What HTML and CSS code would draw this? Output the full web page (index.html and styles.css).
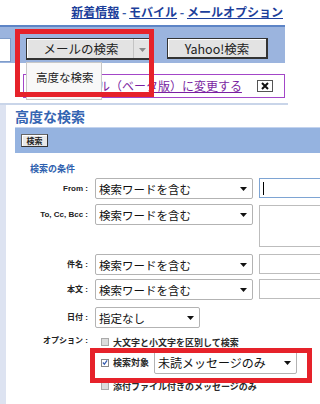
FILE: index.html
```html
<!DOCTYPE html>
<html lang="ja">
<head>
<meta charset="utf-8">
<title>高度な検索</title>
<link rel="stylesheet" href="styles.css">
</head>
<body>
<div class="page">
  <div class="toplinks">
    <a href="#">新着情報</a><span class="sep"> - </span><a href="#">モバイル</a><span class="sep"> - </span><a href="#">メールオプション</a>
  </div>

  <div class="searchbar">
    <div class="q"></div>
    <div class="btn split">
      <span class="btn-label">メールの検索</span>
      <span class="btn-drop"><svg width="7" height="4" viewBox="0 0 7 4"><path d="M0 0h7L3.5 4z" fill="#8a8a8a"/></svg></span>
    </div>
    <div class="btn yahoo">Yahoo!検索</div>
  </div>

  <div class="notice">
    <a href="#" class="notice-link">Yahoo!メール（ベータ版）に変更する</a>
    <span class="close"><svg width="8" height="8" viewBox="0 0 8 8"><path d="M1 1l6 6M7 1L1 7" stroke="#111" stroke-width="2"/></svg></span>
  </div>

  <div class="rule"></div>

  <div class="main">
    <div class="strip"></div>
    <div class="content">
      <h1 class="title">高度な検索</h1>
      <div class="toolbar"><span class="mini-btn">検索</span></div>
      <div class="section-title">検索の条件</div>

      <div class="row row-from">
        <div class="label">From :</div>
        <div class="select"><span>検索ワードを含む</span><svg width="7" height="4" viewBox="0 0 7 4"><path d="M0 0h7L3.5 4z" fill="#111"/></svg></div>
        <div class="field focus"><span class="caret"></span></div>
      </div>

      <div class="row row-to">
        <div class="label">To, Cc, Bcc :</div>
        <div class="select"><span>検索ワードを含む</span><svg width="7" height="4" viewBox="0 0 7 4"><path d="M0 0h7L3.5 4z" fill="#111"/></svg></div>
        <div class="field area"></div>
      </div>

      <div class="row row-subject">
        <div class="label">件名 :</div>
        <div class="select"><span>検索ワードを含む</span><svg width="7" height="4" viewBox="0 0 7 4"><path d="M0 0h7L3.5 4z" fill="#111"/></svg></div>
        <div class="field"></div>
      </div>

      <div class="row row-body">
        <div class="label">本文 :</div>
        <div class="select"><span>検索ワードを含む</span><svg width="7" height="4" viewBox="0 0 7 4"><path d="M0 0h7L3.5 4z" fill="#111"/></svg></div>
        <div class="field"></div>
      </div>

      <div class="row row-date">
        <div class="label">日付 :</div>
        <div class="select date"><span>指定なし</span><svg width="7" height="4" viewBox="0 0 7 4"><path d="M0 0h7L3.5 4z" fill="#111"/></svg></div>
      </div>

      <div class="row row-options">
        <div class="label opt-label">オプション :</div>
        <div class="options">
          <div class="opt opt1"><span class="cb"></span><span class="opt-text">大文字と小文字を区別して検索</span></div>
          <div class="opt opt2"><span class="cb checked"><svg width="7" height="7" viewBox="0 0 7 7"><path d="M1 3.5l1.8 2L6 1" stroke="#3a5fb0" stroke-width="1.4" fill="none"/></svg></span><span class="opt-text">検索対象</span>
            <div class="select unread"><span>未読メッセージのみ</span><svg width="7" height="4" viewBox="0 0 7 4"><path d="M0 0h7L3.5 4z" fill="#111"/></svg></div>
          </div>
          <div class="opt opt3"><span class="cb"></span><span class="opt-text">添付ファイル付きのメッセージのみ</span></div>
        </div>
      </div>
    </div>
  </div>

  <div class="menu">高度な検索</div>
  <div class="highlight hl-top"></div>
  <div class="highlight hl-bottom"></div>
</div>
</body>
</html>
```

FILE: styles.css
```css
* { box-sizing: border-box; margin: 0; padding: 0; }
html, body { width: 320px; height: 404px; overflow: hidden; background: #fff; }
body { font-family: "Noto Sans CJK JP", "Liberation Sans", sans-serif; color: #222; }
.page { position: relative; width: 320px; height: 404px; overflow: hidden; }

/* top links */
.toplinks {
  height: 25px;
  display: flex;
  justify-content: flex-end;
  padding: 4px 37px 0 0;
  font-size: 12px;
  font-weight: bold;
  line-height: 15px;
  color: #1d3f9b;
}
.toplinks a { color: #1d3f9b; text-decoration: underline; }
.sep { white-space: pre; color: #3a5aa8; }

/* search bar */
.searchbar {
  width: 285px;
  height: 38px;
  background: #9bb4de;
  border-top: 2px solid #5d84c6;
  display: flex;
  align-items: flex-start;
  gap: 15px;
  padding-top: 11px;
}
.q { width: 11px; height: 24px; background: #fff; border: 1px solid #7f9cc9; border-left: none; flex: none; }
.btn {
  height: 22px;
  flex: none;
  background: #e3e3e3;
  border: 1px solid #333;
  border-right-width: 2px;
  border-bottom-width: 2px;
  box-shadow: inset 1px 1px 0 #fff;
  font-size: 12.5px;
  line-height: 19px;
  color: #222;
  display: flex;
}
.split { width: 126px; }
.btn-label { flex: 1; text-align: center; padding-left: 2px; }
.btn-drop {
  width: 17px;
  border-left: 1px solid #c4c4c4;
  display: flex;
  align-items: center;
  justify-content: center;
  padding-top: 2px;
}
.yahoo { width: 101px; height: 21px; justify-content: center; }

/* notice */
.notice {
  margin: 11px 0 0 23px;
  width: 262px;
  height: 24px;
  border: 1px solid #a346c8;
  display: flex;
  align-items: center;
  justify-content: space-between;
  padding: 0 11px 0 12px;
}
.notice-link { font-size: 12px; line-height: 16px; color: #7b1fa2; text-decoration: underline; }
.close {
  width: 16px;
  height: 12px;
  border: 1px solid #555;
  background: #fff;
  display: flex;
  align-items: center;
  justify-content: center;
}

.rule { width: 288px; height: 2px; background: #c9d5e9; margin-top: 5px; }

/* main */
.main { display: flex; height: 299px; }
.strip { width: 6px; flex: none; background: #dde3f1; }
.content { flex: 1; min-width: 0; padding-left: 9px; }
.title {
  height: 22px;
  font-size: 14px;
  line-height: 22px;
  font-weight: bold;
  color: #3565b2;
}
.toolbar {
  height: 26px;
  background: #95b3e0;
  border-top: 1px solid #c3d3ee;
  display: flex;
  align-items: center;
  padding-left: 6px;
}
.mini-btn {
  width: 27px;
  height: 13px;
  background: #e8e8e8;
  border: 1px solid #666;
  border-right-color: #333;
  border-bottom-color: #333;
  box-shadow: inset 1px 1px 0 #fff;
  font-size: 8px;
  font-weight: bold;
  line-height: 11px;
  text-align: center;
  color: #222;
}
.section-title {
  margin-top: 10px;
  height: 12px;
  padding-left: 15px;
  font-size: 9px;
  font-weight: bold;
  line-height: 12px;
  color: #2e5fae;
}

/* form rows */
.row { display: flex; align-items: flex-start; }
.row-from { margin-top: 3px; }
.row-to { margin-top: 5px; }
.row-subject { margin-top: 7px; }
.row-body { margin-top: 4px; }
.row-date { margin-top: 7px; }
.row-options { margin-top: 7px; }

.label {
  width: 73px;
  flex: none;
  text-align: right;
  font-family: "Liberation Sans", "Noto Sans CJK JP", sans-serif;
  font-size: 8px;
  font-weight: bold;
  line-height: 21px;
  color: #222;
}
.opt-label { line-height: 10px; padding-top: 1px; }

.select {
  width: 158px;
  height: 21px;
  flex: none;
  margin-left: 7px;
  border: 1px solid #b3b3b3;
  border-radius: 2px;
  background: #fff;
  display: flex;
  align-items: center;
  justify-content: space-between;
  padding: 0 5px 0 3px;
  font-size: 11.5px;
  font-weight: normal;
  color: #111;
}
.select.date { width: 105px; }

.field {
  width: 80px;
  height: 20px;
  flex: none;
  margin-left: 6px;
  border: 1px solid #bdbdbd;
  background: #fff;
  position: relative;
}
.field.focus { border-color: #7ea4d3; }
.caret { position: absolute; left: 3px; top: 3px; width: 1px; height: 13px; background: #000; }
.field.area { height: 42px; margin-top: 1px; }

/* options */
.options { margin-left: 13px; }
.opt {
  display: flex;
  align-items: center;
  font-size: 9px;
  font-weight: bold;
  color: #2a2a2a;
}
.opt1 { height: 14px; }
.opt2 { height: 23px; margin-top: 2px; }
.opt3 { height: 14px; margin-top: 5px; }
.cb {
  width: 8px;
  height: 8px;
  border: 1px solid #aaa;
  background: #dcdcdc;
  margin-right: 4px;
  display: flex;
  align-items: center;
  justify-content: center;
  flex: none;
}
.cb.checked { background: #fff; border-color: #888; }
.select.unread { width: 143px; height: 23px; margin-left: 5px; font-size: 12px; }

/* overlays */
.menu {
  position: absolute;
  left: 26px;
  top: 62px;
  width: 76px;
  height: 38px;
  background: #f8f8f8;
  border: 1px solid #c8c8c8;
  font-size: 11.5px;
  line-height: 14px;
  padding: 7px 0 0 9px;
  color: #222;
}
.highlight { position: absolute; border: 5px solid #e6222a; }
.hl-top { left: 15px; top: 29px; width: 139px; height: 68px; }
.hl-bottom { left: 90px; top: 348px; width: 222px; height: 35px; }
```
